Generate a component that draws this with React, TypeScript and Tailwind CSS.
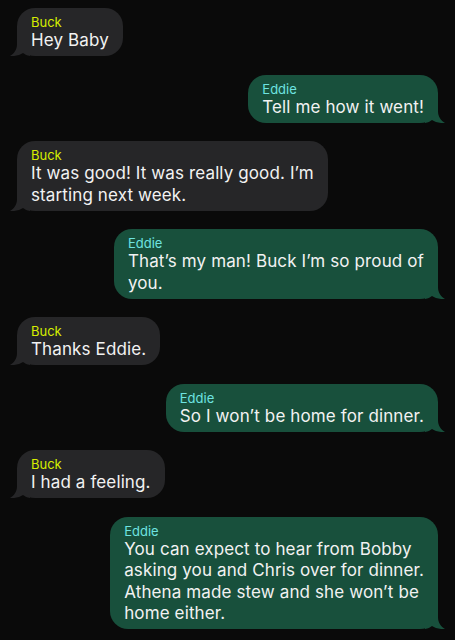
import React from "react";

type Msg = {
  from: "Buck" | "Eddie";
  lines: string[];
};

const messages: Msg[] = [
  { from: "Buck", lines: ["Hey Baby"] },
  { from: "Eddie", lines: ["Tell me how it went!"] },
  { from: "Buck", lines: ["It was good! It was really good. I\u2019m", "starting next week."] },
  { from: "Eddie", lines: ["That\u2019s my man! Buck I\u2019m so proud of", "you."] },
  { from: "Buck", lines: ["Thanks Eddie."] },
  { from: "Eddie", lines: ["So I won\u2019t be home for dinner."] },
  { from: "Buck", lines: ["I had a feeling."] },
  {
    from: "Eddie",
    lines: [
      "You can expect to hear from Bobby",
      "asking you and Chris over for dinner.",
      "Athena made stew and she won\u2019t be",
      "home either.",
    ],
  },
];

function Tail({ mine }: { mine: boolean }) {
  return (
    <svg
      viewBox="0 0 20 20"
      className={
        mine
          ? "absolute bottom-0 right-[-7px] w-5 h-5 -scale-x-100 text-[#18503c]"
          : "absolute bottom-0 left-[-7px] w-5 h-5 text-[#262628]"
      }
    >
      <path
        d="M7 0 L7 8 C7 14 4 17.5 0 20 C5 20.5 10 19 13 17 C15 18.5 17 19.5 20 20 L20 0 Z"
        fill="currentColor"
      />
    </svg>
  );
}

function Bubble({ msg }: { msg: Msg }) {
  const mine = msg.from === "Eddie";
  return (
    <div className={mine ? "flex justify-end" : "flex justify-start"}>
      <div
        className={
          "relative rounded-[18px] px-[14px] pt-[7px] pb-[4.5px] " +
          (mine ? "bg-[#18503c]" : "bg-[#262628]")
        }
      >
        <Tail mine={mine} />
        <div className="relative">
          <p
            className={
              "text-[13px] leading-[15px] " +
              (mine ? "text-[#6ee3e0]" : "text-[#d6ee00]")
            }
          >
            {msg.from}
          </p>
          <p className="text-[17px] leading-[21.5px] tracking-[0.12px] text-[#f2f2f2] whitespace-nowrap">
            {msg.lines.map((l, i) => (
              <span key={i} className="block">
                {l}
              </span>
            ))}
          </p>
        </div>
      </div>
    </div>
  );
}

export default function App() {
  return (
    <div
      className="w-[455px] h-[640px] overflow-hidden bg-[#0a0a0a] px-[17px] pt-[8px] flex flex-col gap-[18.5px]"
      style={{ fontFamily: "Inter, 'Noto Sans', sans-serif" }}
    >
      {messages.map((m, i) => (
        <Bubble key={i} msg={m} />
      ))}
    </div>
  );
}
